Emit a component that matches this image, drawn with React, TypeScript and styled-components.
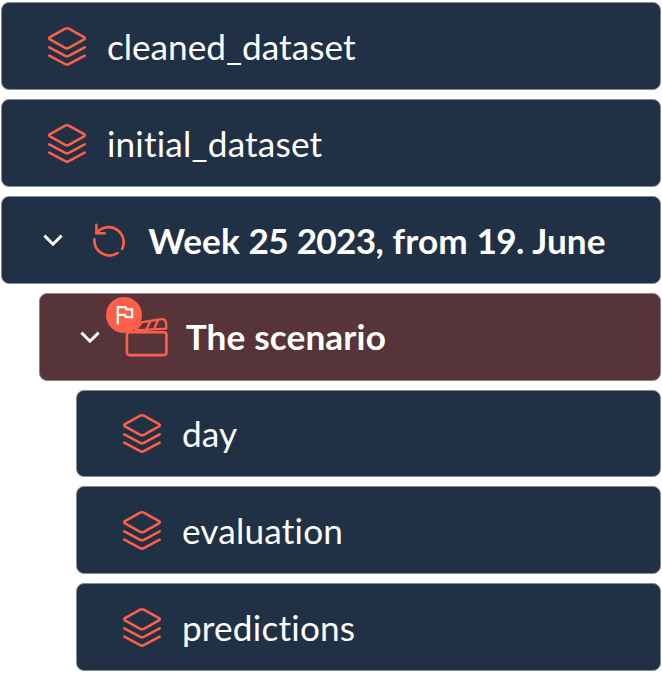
import React from "react";
import styled, { createGlobalStyle } from "styled-components";

const GlobalStyle = createGlobalStyle`
  body { margin: 0; background: #fff; overflow: hidden; }
`;

const Tree = styled.div`
  box-sizing: border-box;
  width: 662px;
  padding: 2.48px 1.4px 0 1.2px;
  display: flex;
  flex-direction: column;
  gap: 9.28px;
`;

const Row = styled.div<{ $level?: number; $active?: boolean; $bold?: boolean }>`
  box-sizing: border-box;
  height: ${(p) => (p.$active ? 87.8 : 87.5)}px;
  margin-bottom: ${(p) => (p.$active ? -0.3 : 0)}px;
  margin-left: ${(p) => (p.$level ?? 0) * 37.5}px;
  border: 1px solid ${(p) => (p.$active ? "#94828a" : "#838d9b")};
  border-radius: 8px;
  background: ${(p) => (p.$active ? "#573439" : "#203045")};
  display: flex;
  align-items: center;
  color: #fff;
  font-family: Lato, sans-serif;
  font-size: 35.2px;
  font-variant-ligatures: none;
  font-weight: ${(p) => (p.$bold ? 700 : 400)};
  line-height: 44px;
  white-space: nowrap;
`;

const Label = styled.span<{ $tracking?: number; $lift?: number }>`
  letter-spacing: ${(p) => p.$tracking ?? 0.12}px;
  padding-bottom: ${(p) => p.$lift ?? 0}px;
`;

const Digits = styled.span`
  letter-spacing: -0.7px;
`;

const IconSlot = styled.div<{ $before: number; $after: number }>`
  position: relative;
  flex: none;
  display: flex;
  margin-left: ${(p) => p.$before}px;
  margin-right: ${(p) => p.$after}px;
`;

const Badge = styled.span`
  position: absolute;
  left: -18.6px;
  top: -19.4px;
  width: 36px;
  height: 36px;
  border-radius: 50%;
  background: #ff5f49;
  display: flex;
`;

const Line = styled.svg`
  display: block;
  fill: none;
  stroke: #ff5f49;
  stroke-width: 2.6;
  stroke-linecap: round;
  stroke-linejoin: round;
  overflow: visible;
`;

const WhiteLine = styled(Line)`
  stroke: #fff;
  stroke-linecap: butt;
  stroke-linejoin: miter;
`;

const LayersIcon = () => (
  <Line width="40" height="40" viewBox="0 -0.8 40 40">
    <path d="M18.2 1.9Q20 .9 21.8 1.9L37 10.3Q38.6 11.4 37 12.5L21.8 21Q20 22 18.2 21L3 12.5Q1.4 11.4 3 10.3Z" />
    <path d="M2.3 20.6 18.2 29Q20 30 21.8 29L37.7 20.6" />
    <path d="M2.3 28.8 18.2 37.3Q20 38.3 21.8 37.3L37.7 28.8" />
  </Line>
);

const Chevron = () => (
  <WhiteLine width="20" height="14" viewBox="0 -1 20 14">
    <path d="M1.4 1.6 10 10.2 18.6 1.6" strokeWidth="3" />
  </WhiteLine>
);

const CycleIcon = () => (
  <Line width="36" height="36" viewBox="-0.6 0 36 36">
    <path d="M4.8 2.9V11.2H13" />
    <path d="M4.8 11.2A15.15 15.15 0 0 1 30.5 27" />
    <path d="M2.8 17.3A15.15 15.15 0 0 0 26.1 31" />
  </Line>
);

const SceneIcon = () => (
  <Line width="44" height="40" viewBox="0 0 44 40">
    <rect x="1.9" y="15.3" width="39.5" height="22.8" rx="2.5" />
    <path d="M10.3 13.3 41.2 11.6V6.2Q40.5 1.7 36.5 2.2L17 5.2ZM21.3 12.7 25.3 4.3M29 12.3 33 3" strokeWidth="2.3" />
  </Line>
);

const FlagIcon = () => (
  <WhiteLine width="36" height="36" viewBox="0 0 36 36">
    <path d="M11.8 27.2V10.1H19.4L20.4 12.4H26.1V20.2H20L18.8 17.9H11.8" strokeWidth="2.3" />
  </WhiteLine>
);

interface DatasetProps {
  name: string;
  level?: number;
  tracking?: number;
}

const Dataset = ({ name, level = 0, tracking }: DatasetProps) => (
  <Row $level={level}>
    <IconSlot $before={45} $after={19.7}>
      <LayersIcon />
    </IconSlot>
    <Label $tracking={tracking}>{name}</Label>
  </Row>
);

export default function App() {
  return (
    <>
      <GlobalStyle />
      <Tree>
        <Dataset name="cleaned_dataset" tracking={0} />
        <Dataset name="initial_dataset" tracking={0.17} />
        <Row $bold>
          <IconSlot $before={41} $after={28}>
            <Chevron />
          </IconSlot>
          <IconSlot $before={0} $after={21}>
            <CycleIcon />
          </IconSlot>
          <Label>
            Week <Digits>25</Digits> <Digits>2023</Digits>, from <Digits>19</Digits>. June
          </Label>
        </Row>
        <Row $level={1} $active $bold>
          <IconSlot $before={40} $after={25}>
            <Chevron />
          </IconSlot>
          <IconSlot $before={0} $after={17}>
            <SceneIcon />
            <Badge>
              <FlagIcon />
            </Badge>
          </IconSlot>
          <Label $lift={1.4}>The scenario</Label>
        </Row>
        <Dataset name="day" level={2} />
        <Dataset name="evaluation" level={2} tracking={0.2} />
        <Dataset name="predictions" level={2} tracking={0.2} />
      </Tree>
    </>
  );
}
